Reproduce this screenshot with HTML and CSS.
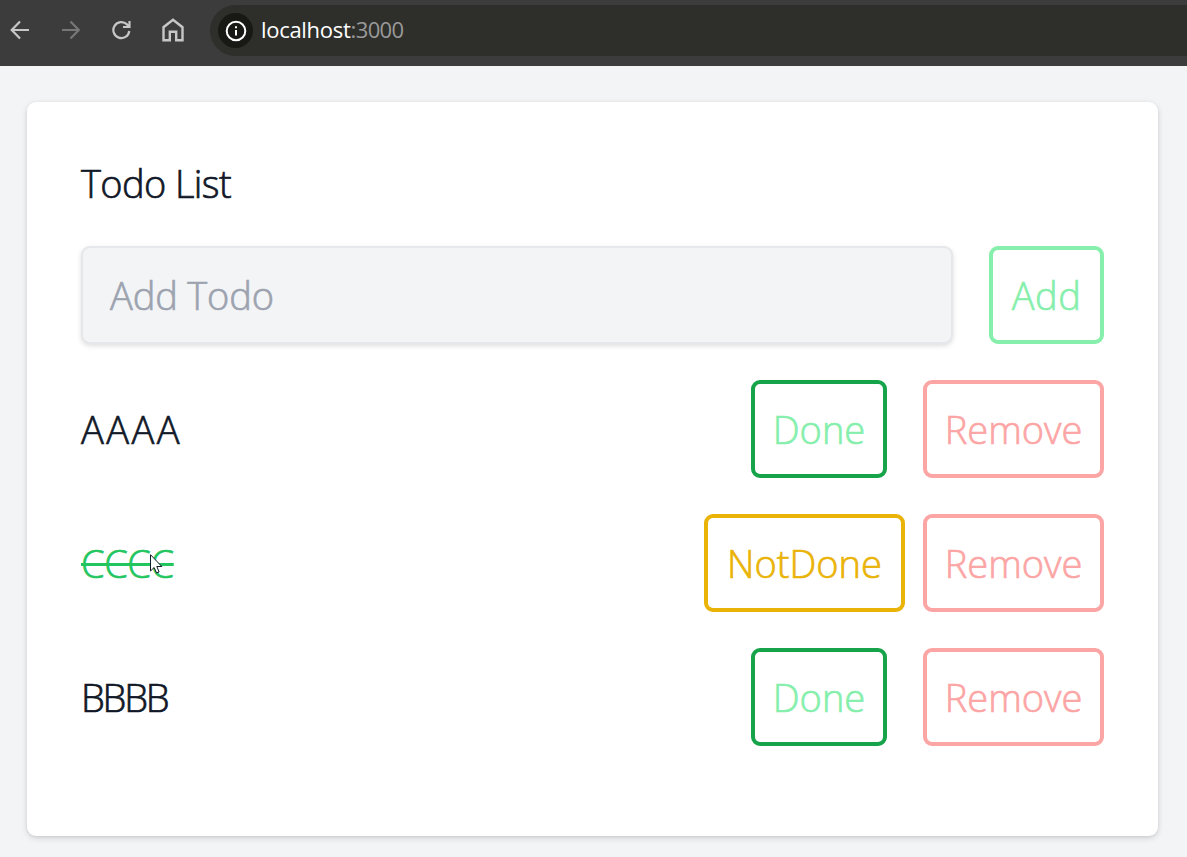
FILE: index.html
```html
<!DOCTYPE html>
<html lang="en">
<head>
<meta charset="utf-8">
<title>Todo List</title>
<link rel="stylesheet" href="styles.css">
</head>
<body>
<header class="toolbar">
  <nav class="nav">
    <svg class="icon" width="20" height="20" viewBox="0 0 20 20"><path d="M19 10H2M10 1.500 1.700 10l8.300 8.500"/></svg>
    <svg class="icon icon-off" width="20" height="20" viewBox="0 0 20 20"><path d="M1 10h17M9.500 1.500l8.300 8.500-8.300 8.500"/></svg>
    <svg class="icon" width="20" height="20" viewBox="0 0 20 20"><path d="M18.300 11A8 8 0 1 1 16 4.400L18 6.500M18.500 1v6h-6.500"/></svg>
    <svg class="icon home" width="22" height="24" viewBox="0 0 22 24"><path d="M1.500 22.300V9.200L11 1.800l9.500 7.400v13.100h-6.300v-8.600H7.800v8.600z"/></svg>
  </nav>
  <div class="address">
    <span class="info"><svg class="info-icon" width="22" height="22" viewBox="0 0 22 22"><circle cx="11" cy="11" r="9.300"/><path d="M11 10v5.500M11 6.200v2"/></svg></span>
    <span class="url"><span class="host">localhost</span><span class="port">:3000</span></span>
  </div>
</header>
<main class="card">
  <h1 class="title"><span class="t-title">Todo List</span></h1>
  <form class="add-row">
    <div class="field"><span class="t-field">Add Todo</span></div>
    <button type="button" class="btn add"><span class="t-add">Add</span></button>
  </form>
  <div class="row">
    <p class="task"><span class="t-a">AAAA</span></p>
    <button class="btn done"><span class="t-done">Done</span></button>
    <button class="btn remove"><span class="t-remove">Remove</span></button>
  </div>
  <div class="row">
    <p class="task"><span class="struck">CCCC</span></p>
    <button class="btn notdone"><span class="t-notdone">NotDone</span></button>
    <button class="btn remove"><span class="t-remove">Remove</span></button>
  </div>
  <div class="row">
    <p class="task"><span class="t-b">BBBB</span></p>
    <button class="btn done"><span class="t-done">Done</span></button>
    <button class="btn remove"><span class="t-remove">Remove</span></button>
  </div>
</main>
<svg class="cursor" width="13" height="20" viewBox="0 0 13 20"><path d="M.5.700v16.300l3.600-3.500 2.500 5.500 2.500-1-2.300-5.500h5z"/></svg>
</body>
</html>
```
FILE: styles.css
```css
* { box-sizing: border-box; }
body {
  margin: 0;
  height: 857px;
  overflow: hidden;
  background: #f3f4f6;
  color: #111827;
  font: 300 38px/54px "Open Sans", "Noto Sans", sans-serif;
}
.toolbar {
  height: 66px;
  padding-top: 5px;
  display: flex;
  background: #3c3c3c;
}
.nav {
  width: 210px;
  height: 50px;
  padding-left: 10px;
  display: flex;
  align-items: center;
  gap: 30.500px;
}
.icon { fill: none; stroke: #c7c7c7; stroke-width: 2.2; flex: none; }
.icon-off { stroke: #777; }
.home { stroke-width: 2.4; }
.address {
  flex: 1;
  height: 51px;
  padding-left: 8px;
  display: flex;
  align-items: center;
  background: #2e2f2b;
  border-radius: 26px 0 0 26px;
}
.info {
  width: 35px;
  height: 35px;
  display: grid;
  place-items: center;
  background: #181915;
  border-radius: 50%;
}
.info-icon { fill: none; stroke: #fff; stroke-width: 2; }
.url { margin: 0 0 3px 8px; font-size: 22px; line-height: 30px; font-weight: 400; }
.host { color: #fff; letter-spacing: -0.3px; }
.port { color: #999; letter-spacing: -0.6px; }
.card {
  width: 1131px;
  height: 734px;
  margin: 36px 0 0 27px;
  padding: 54px 54px 0;
  background: #fff;
  border-radius: 9px;
  box-shadow: 0 2px 6px rgba(0,0,0,.14), 0 1px 3px rgba(0,0,0,.06);
  -webkit-text-stroke: 0.7px;
}
.title { margin: 0 0 36px; font: inherit; }
.t-title { letter-spacing: -0.6px; }
.t-field { letter-spacing: -0.15px; }
.t-add { letter-spacing: 0.5px; }
.t-a { letter-spacing: 2.4px; }
.t-b { letter-spacing: -2.2px; }
.add-row { display: flex; gap: 36px; height: 98px; margin: 0; }
.field {
  width: 872px;
  padding-left: 27px;
  display: flex;
  align-items: center;
  background: #f3f4f6;
  border: 2px solid #e5e7eb;
  border-radius: 9px;
  box-shadow: 0 2px 5px rgba(0,0,0,.13);
  color: #9ca3af;
}
.row { display: flex; align-items: center; height: 98px; margin-top: 36px; }
.task { flex: 1; margin: 0; }
.btn {
  height: 98px;
  padding: 0;
  display: flex;
  align-items: center;
  justify-content: center;
  background: #fff;
  border: 4px solid;
  border-radius: 9px;
  font: inherit;
  white-space: nowrap;
}
.add { width: 115px; color: #86efac; }
.done { width: 136px; margin-right: 36px; color: #86efac; border-color: #16a34a; }
.notdone { width: 201px; margin-right: 18px; color: #eab308; }
.remove { width: 181px; color: #fca5a5; }
.struck { color: #22c55e; letter-spacing: -0.4px; text-decoration: line-through; text-decoration-thickness: 2.500px; }
.cursor { position: absolute; left: 150px; top: 554px; fill: #fff; stroke: #111827; stroke-width: 1; }
```
